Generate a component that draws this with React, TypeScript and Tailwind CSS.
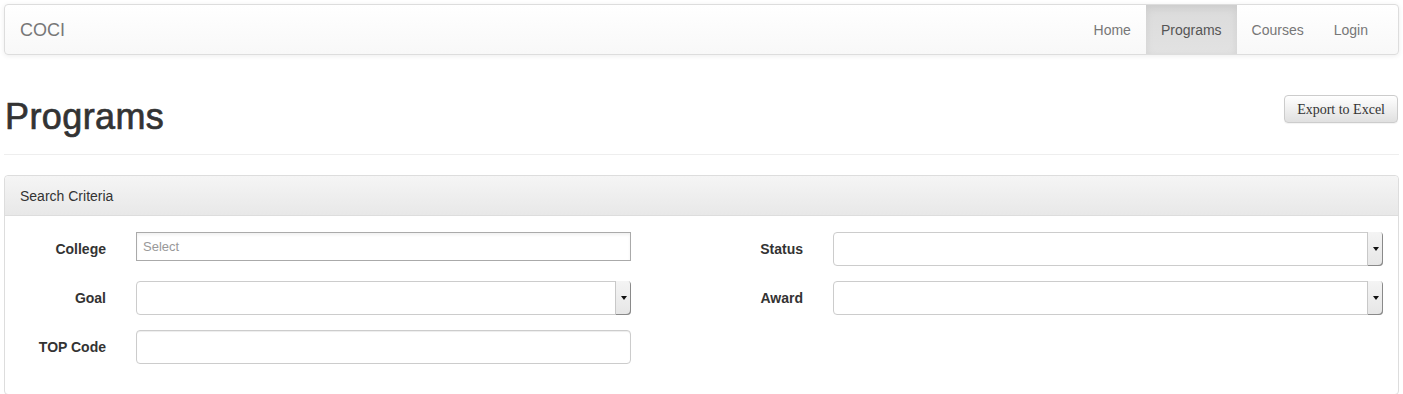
import React from 'react'

const font = "font-['Liberation_Sans','Helvetica_Neue',Arial,sans-serif]"

// 古い Chrome 風のセレクトボックス
const FakeSelect = () => (
  <div className="relative h-[34px] w-full rounded-[4px] border border-[#ccc] bg-white">
    <div className="absolute top-[-1px] right-[-1px] bottom-[-1px] flex w-[16px] items-center justify-center rounded-r-[4px] border-l border-[#c8c8c8] bg-gradient-to-b from-[#f4f4f4] to-[#e6e6e6] shadow-[inset_-1px_-1px_0_#8a8a8a]">
      <div className="h-0 w-0 border-x-[3px] border-t-[4px] border-x-transparent border-t-[#111]" />
    </div>
  </div>
)

const TextInput = () => (
  <div className="h-[34px] w-full rounded-[4px] border border-[#ccc] bg-white shadow-[inset_0_1px_1px_rgba(0,0,0,0.075)]" />
)

const Label = ({ children }: { children: React.ReactNode }) => (
  <div className="flex h-[34px] items-center justify-end px-[15px] text-[14px] font-bold text-[#333]">
    {children}
  </div>
)

const App = () => {
  return (
    <div className={`${font} min-h-screen bg-white px-[4px] pt-[4px] text-[14px] text-[#333]`}>
      {/* ナビバー */}
      <div className="flex h-[51px] items-stretch justify-between rounded-[4px] border border-[#ddd] bg-gradient-to-b from-white to-[#f8f8f8] shadow-[0_1px_5px_rgba(0,0,0,0.075)]">
        <div className="flex items-center pt-[2px] pl-[15px] text-[18px] text-[#777]">COCI</div>
        <div className="flex items-stretch pr-[15px]">
          <div className="flex items-center px-[15px] pt-[1px] text-[#777]">Home</div>
          <div className="flex items-center bg-gradient-to-b from-[#dbdbdb] to-[#e2e2e2] px-[15px] pt-[1px] text-[#555] shadow-[inset_0_3px_9px_rgba(0,0,0,0.075)]">
            Programs
          </div>
          <div className="flex items-center px-[15px] pt-[1px] text-[#777]">Courses</div>
          <div className="flex items-center px-[15px] pt-[1px] text-[#777]">Login</div>
        </div>
      </div>

      {/* ページヘッダー */}
      <div className="mt-[40px] border-b border-[#eee] pb-[17px]">
        <div className="flex items-start justify-between pr-[1px]">
          <h1 className="pt-[2px] pl-[1px] text-[36px] leading-[40px] font-normal tracking-[0.4px] text-[#333] [-webkit-text-stroke:0.7px_#333]">
            Programs
          </h1>
          <button className="h-[28px] rounded-[4px] border border-[#ccc] bg-gradient-to-b from-white to-[#e0e0e0] px-[12px] font-['Liberation_Serif',serif] text-[14px] text-[#333] shadow-[0_1px_1px_rgba(0,0,0,0.05)]">
            Export to Excel
          </button>
        </div>
      </div>

      {/* 検索条件パネル */}
      <div className="mt-[20px] rounded-[4px] border border-[#ddd] bg-white">
        <div className="flex h-[40px] items-center rounded-t-[4px] border-b border-[#ddd] bg-gradient-to-b from-[#f5f5f5] to-[#e8e8e8] px-[15px] pt-[1px] text-[14px] text-[#333]">
          Search Criteria
        </div>
        <div className="grid grid-cols-[116px_525px_172px_1fr] gap-y-[15px] pt-[16px] pb-[30px]">
          <Label>College</Label>
          <div className="px-[15px]">
            <div className="flex h-[29px] items-center border border-[#aaa] bg-white pl-[6px] text-[13px] text-[#999] shadow-[inset_0_2px_3px_rgba(0,0,0,0.06)]">
              Select
            </div>
          </div>
          <Label>Status</Label>
          <div className="px-[15px]">
            <FakeSelect />
          </div>

          <Label>Goal</Label>
          <div className="px-[15px]">
            <FakeSelect />
          </div>
          <Label>Award</Label>
          <div className="px-[15px]">
            <FakeSelect />
          </div>

          <Label>TOP Code</Label>
          <div className="px-[15px]">
            <TextInput />
          </div>
          <div />
          <div />
        </div>
      </div>
    </div>
  )
}

export default App
